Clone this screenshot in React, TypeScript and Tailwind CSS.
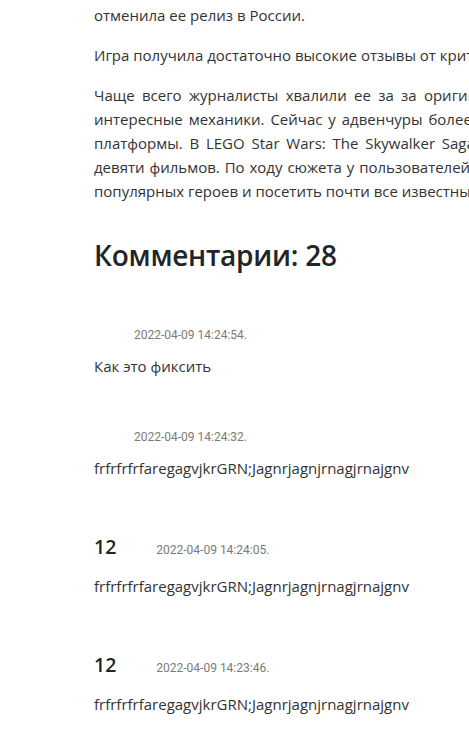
import React from "react";

type Comment = { author?: string; date: string; text: string };

const comments: Comment[] = [
  { date: "2022-04-09 14:24:54.", text: "Как это фиксить" },
  { date: "2022-04-09 14:24:32.", text: "frfrfrfrfaregagvjkrGRN;Jagnrjagnjrnagjrnajgnv" },
  { author: "12", date: "2022-04-09 14:24:05.", text: "frfrfrfrfaregagvjkrGRN;Jagnrjagnjrnagjrnajgnv" },
  { author: "12", date: "2022-04-09 14:23:46.", text: "frfrfrfrfaregagvjkrGRN;Jagnrjagnjrnagjrnajgnv" },
];

function CommentItem({ c }: { c: Comment }) {
  return (
    <div>
      <div className="flex items-baseline">
        {c.author && (
          <span className="text-[19.5px] leading-[40px] font-semibold text-[#212529]">{c.author}</span>
        )}
        <span className="ml-10 font-['Roboto',sans-serif] text-[12px] leading-6 text-[#7a7a7a]">{c.date}</span>
      </div>
      <p className="mt-[7px] whitespace-nowrap">{c.text}</p>
    </div>
  );
}

export default function App() {
  return (
    <div className="w-[469px] h-[734px] overflow-hidden bg-white">
      <div className="pl-[94px] pt-[3px] w-[760px] font-['Open_Sans',sans-serif] text-[15px] leading-6 text-[#333333]">
        <p className="whitespace-nowrap">отменила ее релиз в России.</p>
        <p className="mt-4 whitespace-nowrap">Игра получила достаточно высокие отзывы от критиков и игроков.</p>
        <div className="mt-4">
          <span className="block whitespace-nowrap [word-spacing:3.4px]">
            Чаще всего журналисты хвалили ее за за оригинальный юмор и
          </span>
          <span className="block whitespace-nowrap [word-spacing:2px]">
            интересные механики. Сейчас у адвенчуры более 80 баллов на Metacritic в зависимости от
          </span>
          <span className="block whitespace-nowrap [word-spacing:2.9px]">
            платформы. В LEGO Star Wars: The Skywalker Saga собраны сюжеты всех
          </span>
          <span className="block whitespace-nowrap [word-spacing:1px]">
            девяти фильмов. По ходу сюжета у пользователей будет возможность сыграть за
          </span>
          <span className="block whitespace-nowrap">
            популярных героев и посетить почти все известные локации вселенной.
          </span>
        </div>
        <h2 className="mt-[34px] text-[28px] leading-9 font-semibold tracking-[-0.25px] text-[#212529]">
          Комментарии: 28
        </h2>
        <div className="mt-[50px] flex flex-col gap-[47px]">
          {comments.map((c, i) => (
            <CommentItem key={i} c={c} />
          ))}
        </div>
      </div>
    </div>
  );
}
